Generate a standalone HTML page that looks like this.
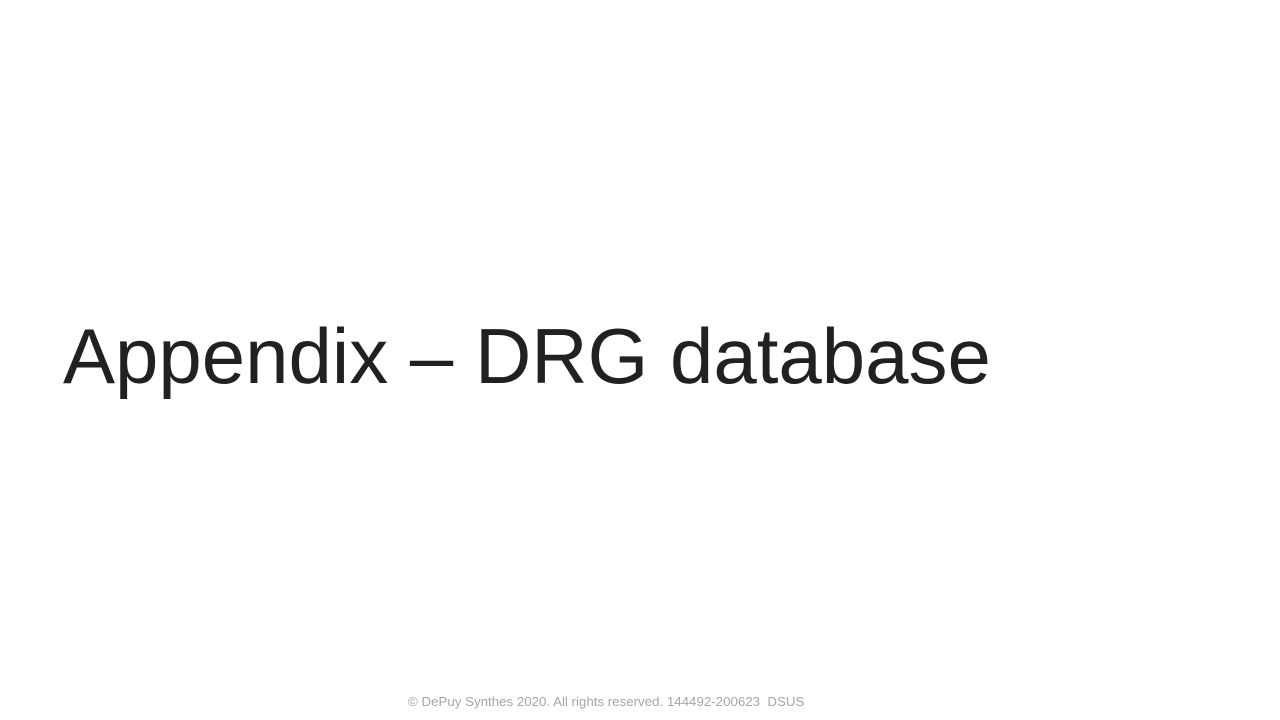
<!DOCTYPE html>
<html><head><style>
body{margin:0;width:1280px;height:720px;background:#fff;position:relative;overflow:hidden;font-family:"Liberation Sans",Arial,sans-serif}
.t{position:absolute;left:63px;top:308px;font-size:78px;line-height:96px;color:#212121;white-space:nowrap}
.f{position:absolute;left:408px;top:694px;font-size:13.3px;line-height:16px;color:#a6a6a6;white-space:pre}
</style></head><body>
<div class="t">Appendix – DRG database</div>
<div class="f">© DePuy Synthes 2020. All rights reserved. 144492-200623  DSUS</div>
</body></html>
